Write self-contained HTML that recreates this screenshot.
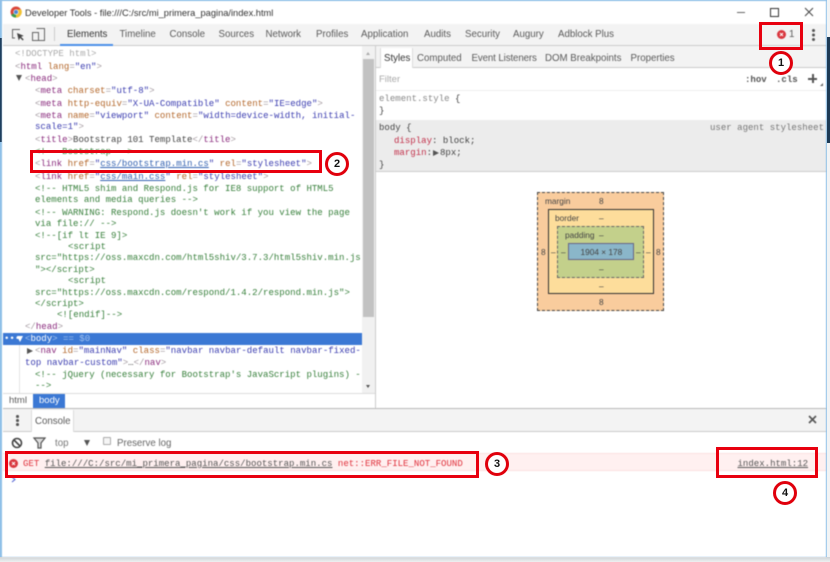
<!DOCTYPE html>
<html lang="es"><head><meta charset="utf-8"><title>Developer Tools</title>
<style>
html,body{margin:0;padding:0;background:#f4f6f7;}
#w{position:absolute;left:0;top:0;width:830px;height:562px;overflow:hidden;background:#f2f4f5;}
#f{position:absolute;left:2px;top:1px;width:824px;height:556px;background:#fff;filter:blur(.45px);overflow:hidden;}
#o{position:absolute;left:0;top:0;width:830px;height:562px;filter:blur(.25px);}
.a{position:absolute;white-space:pre;}
#ui{position:absolute;left:-2px;top:-1px;width:830px;height:562px;}
.s{font-family:"Liberation Sans",sans-serif;font-size:9.7px;color:#5a5a5a;line-height:12px;}
.m{font-family:"Liberation Mono",monospace;font-size:9.05px;line-height:12px;color:#444;}
.t{color:#8a2b7d}.n{color:#b4682c}.v{color:#3b3db0}.g{color:#a49aa0}.c{color:#38803c}.u{color:#2f5fb0;text-decoration:underline}
.r{position:absolute;border:3px solid #e8000f;box-sizing:border-box;}
.k{position:absolute;border:3px solid #e0000c;border-radius:50%;box-sizing:border-box;background:#fff;font:bold 11px/18px "Liberation Sans",sans-serif;color:#111;text-align:center;width:24px;height:24px;}
.b{position:absolute;box-sizing:border-box;}
.bm{font-family:"Liberation Sans",sans-serif;font-size:8.3px;color:#444;line-height:10px;}
</style></head><body>
<div id="w">
<div style="position:absolute;left:0;top:0;width:827px;height:558px;background:#8fc0e8;"></div>
<div style="position:absolute;left:0;top:38px;width:2px;height:104px;background:#1d3f5f;"></div>
<div style="position:absolute;left:827px;top:37px;width:3px;height:106px;background:#1d3a55;"></div>
<div style="position:absolute;left:0;top:557px;width:830px;height:5px;background:linear-gradient(#cfd3d6,#eef0f1);"></div>
<div id="f"><div id="ui">

<!-- title bar -->
<svg class="a" style="left:10px;top:6px" width="12" height="12" viewBox="0 0 12 12"><circle cx="6" cy="6" r="5.5" fill="#d9463a"/><path d="M6 6 1 9 A5.5 5.5 0 0 0 8 11.1Z" fill="#3d9a4c"/><path d="M6 3.5h5.2A5.5 5.5 0 0 1 6 11.5Z" fill="#f1c232"/><circle cx="6" cy="6" r="2.6" fill="#fff"/><circle cx="6" cy="6" r="2" fill="#4a86d8"/></svg>
<div class="a" style="left:25px;top:6.500px;font:9.300px/12px 'Liberation Sans',sans-serif;color:#333;">Developer Tools - file:///C:/src/mi_primera_pagina/index.html</div>
<div class="b" style="left:737px;top:12px;width:8px;height:1px;background:#666"></div>
<div class="b" style="left:770px;top:8px;width:9px;height:9px;border:1px solid #333"></div>
<svg class="a" style="left:804px;top:7px" width="10" height="10" viewBox="0 0 10 10"><path d="M1 1 9 9M9 1 1 9" stroke="#444" stroke-width="1" fill="none"/></svg>

<!-- main tab bar -->
<div class="b" style="left:3px;top:24px;width:824px;height:22px;background:#f3f3f3;border-bottom:1px solid #ccc"></div>
<svg class="a" style="left:11px;top:28px" width="14" height="14" viewBox="0 0 14 14"><path d="M9 1.5H1.5V10H4" stroke="#666" fill="none"/><path d="M6 5l1.7 7.5 1.4-2.6 2.6 2.6 1-1-2.6-2.6 2.6-1.2Z" fill="#444"/></svg>
<svg class="a" style="left:32px;top:27px" width="14" height="15" viewBox="0 0 14 15"><path d="M4.5 1.5h8v12h-8M.5 5.500h6v8h-6Z" stroke="#666" fill="none"/></svg>
<div class="b" style="left:54px;top:27px;width:1px;height:14px;background:#ccc"></div>
<div class="a s" style="left:67px;top:29px;color:#333">Elements</div>
<div class="a s" style="left:119.500px;top:29px">Timeline</div>
<div class="a s" style="left:169.500px;top:29px">Console</div>
<div class="a s" style="left:218.500px;top:29px">Sources</div>
<div class="a s" style="left:265.500px;top:29px">Network</div>
<div class="a s" style="left:316px;top:29px">Profiles</div>
<div class="a s" style="left:361px;top:29px">Application</div>
<div class="a s" style="left:424px;top:29px">Audits</div>
<div class="a s" style="left:465px;top:29px">Security</div>
<div class="a s" style="left:513px;top:29px">Augury</div>
<div class="a s" style="left:558px;top:29px">Adblock Plus</div>
<div class="b" style="left:60px;top:44px;width:53px;height:2px;background:#4b8fe8"></div>
<svg class="a" style="left:777px;top:30px" width="9" height="9" viewBox="0 0 9 9"><circle cx="4.500" cy="4.500" r="4.500" fill="#d9363e"/><path d="M3 3l3 3M6 3 3 6" stroke="#fff" stroke-width="1"/></svg>
<div class="a s" style="left:789px;top:29px">1</div>
<div class="b" style="left:812px;top:29px;width:3px;height:3px;border-radius:50%;background:#555;box-shadow:0 4.500px 0 #555,0 9px 0 #555"></div>

<!-- elements panel -->
<div class="a m g" style="left:15px;top:48px;color:#aaa">&lt;!DOCTYPE html&gt;</div>
<div class="a m" style="left:15px;top:60.500px"><span class="g">&lt;</span><span class="t">html</span> <span class="n">lang</span><span class="g">=</span><span class="v">"en"</span><span class="g">&gt;</span></div>
<div class="a" style="left:16px;top:75px;width:0;height:0;border-left:3.500px solid transparent;border-right:3.500px solid transparent;border-top:6px solid #555"></div>
<div class="a m" style="left:25px;top:72.500px"><span class="g">&lt;</span><span class="t">head</span><span class="g">&gt;</span></div>
<div class="a m" style="left:35px;top:85px"><span class="g">&lt;</span><span class="t">meta</span> <span class="n">charset</span><span class="g">=</span><span class="v">"utf-8"</span><span class="g">&gt;</span></div>
<div class="a m" style="left:35px;top:97.500px"><span class="g">&lt;</span><span class="t">meta</span> <span class="n">http-equiv</span><span class="g">=</span><span class="v">"X-UA-Compatible"</span> <span class="n">content</span><span class="g">=</span><span class="v">"IE=edge"</span><span class="g">&gt;</span></div>
<div class="a m" style="left:35px;top:109.500px"><span class="g">&lt;</span><span class="t">meta</span> <span class="n">name</span><span class="g">=</span><span class="v">"viewport"</span> <span class="n">content</span><span class="g">=</span><span class="v">"width=device-width, initial-</span></div>
<div class="a m" style="left:35px;top:121px"><span class="v">scale=1"</span><span class="g">&gt;</span></div>
<div class="a m" style="left:35px;top:133.500px"><span class="g">&lt;</span><span class="t">title</span><span class="g">&gt;</span>Bootstrap 101 Template<span class="g">&lt;/</span><span class="t">title</span><span class="g">&gt;</span></div>
<div class="a m c" style="left:35px;top:146px">&lt;!-- Bootstrap --&gt;</div>
<div class="a m" style="left:35px;top:158px"><span class="g">&lt;</span><span class="t">link</span> <span class="n">href</span><span class="g">=</span><span class="v">"</span><span class="u">css/bootstrap.min.cs</span><span class="v">"</span> <span class="n">rel</span><span class="g">=</span><span class="v">"stylesheet"</span><span class="g">&gt;</span></div>
<div class="a m" style="left:35px;top:171px"><span class="g">&lt;</span><span class="t">link</span> <span class="n">href</span><span class="g">=</span><span class="v">"</span><span class="u">css/main.css</span><span class="v">"</span> <span class="n">rel</span><span class="g">=</span><span class="v">"stylesheet"</span><span class="g">&gt;</span></div>
<div class="a m c" style="left:35px;top:182.500px">&lt;!-- HTML5 shim and Respond.js for IE8 support of HTML5</div>
<div class="a m c" style="left:35px;top:194px">elements and media queries --&gt;</div>
<div class="a m c" style="left:35px;top:206.500px">&lt;!-- WARNING: Respond.js doesn't work if you view the page</div>
<div class="a m c" style="left:35px;top:218px">via file:// --&gt;</div>
<div class="a m c" style="left:35px;top:229.500px">&lt;!--[if lt IE 9]&gt;</div>
<div class="a m c" style="left:68px;top:241px">&lt;script</div>
<div class="a m c" style="left:35px;top:252px">src="https://oss.maxcdn.com/html5shiv/3.7.3/html5shiv.min.js</div>
<div class="a m c" style="left:35px;top:264px">"&gt;&lt;/script&gt;</div>
<div class="a m c" style="left:68px;top:275px">&lt;script</div>
<div class="a m c" style="left:35px;top:286.500px">src="https://oss.maxcdn.com/respond/1.4.2/respond.min.js"&gt;</div>
<div class="a m c" style="left:35px;top:298px">&lt;/script&gt;</div>
<div class="a m c" style="left:57px;top:309px">&lt;![endif]--&gt;</div>
<div class="a m" style="left:25px;top:321px"><span class="g">&lt;/</span><span class="t">head</span><span class="g">&gt;</span></div>
<div class="b" style="left:3px;top:333px;width:359px;height:11.500px;background:#3b78d4"></div>
<div class="a m" style="left:4px;top:332.500px;color:#fff">•••</div>
<div class="a" style="left:17px;top:336px;width:0;height:0;border-left:3.500px solid transparent;border-right:3.500px solid transparent;border-top:6px solid #fff"></div>
<div class="a m" style="left:25px;top:332.500px;color:#fff"><span style="color:#9fc0ee">&lt;</span>body<span style="color:#9fc0ee">&gt; == $0</span></div>
<div class="b" style="left:19px;top:345px;width:1px;height:48px;background:#e4e4e4"></div>
<div class="a" style="left:27px;top:348px;width:0;height:0;border-top:3.500px solid transparent;border-bottom:3.500px solid transparent;border-left:6px solid #555"></div>
<div class="a m" style="left:35px;top:345px"><span class="g">&lt;</span><span class="t">nav</span> <span class="n">id</span><span class="g">=</span><span class="v">"mainNav"</span> <span class="n">class</span><span class="g">=</span><span class="v">"navbar navbar-default navbar-fixed-</span></div>
<div class="a m" style="left:25px;top:356.500px"><span class="v">top navbar-custom"</span><span class="g">&gt;</span>…<span class="g">&lt;/</span><span class="t">nav</span><span class="g">&gt;</span></div>
<div class="a m c" style="left:35px;top:369px">&lt;!-- jQuery (necessary for Bootstrap's JavaScript plugins) -</div>
<div class="a m c" style="left:35px;top:380px">--&gt;</div>

<!-- scrollbar -->
<div class="b" style="left:362px;top:46px;width:13px;height:347px;background:#f1f1f1"></div>
<div class="b" style="left:363px;top:59px;width:11px;height:258px;background:#c2c2c2"></div>
<div class="a" style="left:366px;top:52px;width:0;height:0;border-left:2.500px solid transparent;border-right:2.500px solid transparent;border-bottom:3px solid #aaa"></div>
<div class="a" style="left:366px;top:385px;width:0;height:0;border-left:2.500px solid transparent;border-right:2.500px solid transparent;border-top:3px solid #555"></div>

<!-- breadcrumb -->
<div class="b" style="left:3px;top:393px;width:372px;height:16px;background:#fff;border-top:1px solid #ddd"></div>
<div class="a s" style="left:9px;top:395px;font-size:9.500px">html</div>
<div class="b" style="left:33px;top:394px;width:32px;height:15px;background:#3b78d4"></div>
<div class="a s" style="left:39px;top:395px;color:#fff;font-size:9.500px">body</div>

<!-- sidebar -->
<div class="b" style="left:375px;top:46px;width:1px;height:363px;background:#ccc"></div>
<div class="b" style="left:376px;top:46px;width:451px;height:22px;background:#f3f3f3;border-bottom:1px solid #ccc"></div>
<div class="b" style="left:380px;top:48px;width:33px;height:20px;background:#fff;border-left:1px solid #ddd;border-right:1px solid #ddd"></div>
<div class="a s" style="left:384px;top:53px;color:#333">Styles</div>
<div class="a s" style="left:417px;top:53px">Computed</div>
<div class="a s" style="left:471.500px;top:53px;letter-spacing:-.1px">Event Listeners</div>
<div class="a s" style="left:545px;top:53px">DOM Breakpoints</div>
<div class="a s" style="left:630.500px;top:53px">Properties</div>
<div class="a s" style="left:379px;top:74px;color:#aaa;font-size:9.500px">Filter</div>
<div class="a m" style="left:745px;top:74px;color:#555;font-weight:bold">:hov</div>
<div class="a m" style="left:776px;top:74px;color:#555;font-weight:bold">.cls</div>
<div class="a" style="left:808px;top:74px;width:9px;height:1.500px;margin-top:4px;background:#555"></div>
<div class="a" style="left:812px;top:74px;width:1.500px;height:9px;background:#555"></div>
<div class="a" style="left:820px;top:83px;width:0;height:0;border-left:3px solid transparent;border-bottom:3px solid #666"></div>
<div class="b" style="left:376px;top:90px;width:451px;height:1px;background:#eee"></div>
<div class="a m" style="left:379px;top:92.500px;color:#888">element.style <span style="color:#444">{</span></div>
<div class="a m" style="left:379px;top:105px">}</div>
<div class="b" style="left:376px;top:120px;width:451px;height:52px;background:#ececec;border-bottom:1px solid #ccc"></div>
<div class="a m" style="left:379px;top:122px">body {</div>
<div class="a m" style="left:710px;top:122px;color:#777">user agent stylesheet</div>
<div class="a m" style="left:394px;top:135px"><span style="color:#c2304a">display</span>: block;</div>
<div class="a m" style="left:394px;top:147px"><span style="color:#c2304a">margin</span>:</div>
<div class="a" style="left:433px;top:150px;width:0;height:0;border-top:3px solid transparent;border-bottom:3px solid transparent;border-left:6px solid #555"></div>
<div class="a m" style="left:440px;top:147px">8px;</div>
<div class="a m" style="left:379px;top:159px">}</div>

<!-- box model -->
<div class="b" style="left:537px;top:192px;width:127px;height:119px;background:#f9cc9d;border:1px dashed #444"></div>
<div class="b" style="left:548px;top:209px;width:106px;height:85px;background:#fddd9b;border:1px solid #333"></div>
<div class="b" style="left:557px;top:226px;width:87px;height:52px;background:#c3d08b;border:1px dashed #666"></div>
<div class="b" style="left:568px;top:243px;width:66px;height:17px;background:#8ab6c9;border:1px solid #668"></div>
<div class="a bm" style="left:545px;top:196px">margin</div>
<div class="a bm" style="left:599px;top:196px">8</div>
<div class="a bm" style="left:555px;top:213px">border</div>
<div class="a bm" style="left:599px;top:213px">–</div>
<div class="a bm" style="left:565px;top:230px">padding</div>
<div class="a bm" style="left:599px;top:230px">–</div>
<div class="a bm" style="left:580.500px;top:247px">1904 × 178</div>
<div class="a bm" style="left:541px;top:247px">8</div>
<div class="a bm" style="left:551px;top:247px">–</div>
<div class="a bm" style="left:561px;top:247px">–</div>
<div class="a bm" style="left:636px;top:247px">–</div>
<div class="a bm" style="left:646px;top:247px">–</div>
<div class="a bm" style="left:656px;top:247px">8</div>
<div class="a bm" style="left:599px;top:264px">–</div>
<div class="a bm" style="left:599px;top:281px">–</div>
<div class="a bm" style="left:599px;top:297px">8</div>

<!-- drawer -->
<div class="b" style="left:3px;top:408px;width:824px;height:24px;background:#f3f3f3;border-top:1px solid #bbb;border-bottom:1px solid #ccc"></div>
<div class="b" style="left:16px;top:415px;width:2.500px;height:2.500px;border-radius:50%;background:#555;box-shadow:0 4px 0 #555,0 8px 0 #555"></div>
<div class="b" style="left:31px;top:410px;width:43px;height:22px;background:#fff;border-left:1px solid #ddd;border-right:1px solid #ddd"></div>
<div class="a s" style="left:35px;top:416px">Console</div>
<svg class="a" style="left:808px;top:415px" width="9" height="9" viewBox="0 0 9 9"><path d="M1 1 8 8M8 1 1 8" stroke="#555" stroke-width="1.600" fill="none"/></svg>

<!-- console toolbar -->
<svg class="a" style="left:11px;top:437px" width="12" height="12" viewBox="0 0 12 12"><circle cx="6" cy="6" r="4.500" stroke="#444" stroke-width="1.600" fill="none"/><path d="M3 3l6 6" stroke="#444" stroke-width="1.600"/></svg>
<svg class="a" style="left:33px;top:437px" width="13" height="12" viewBox="0 0 13 12"><path d="M1 1h11L8 6v5H5V6Z" stroke="#555" stroke-width="1.200" fill="#ddd"/></svg>
<div class="a s" style="left:55px;top:437.500px;color:#777">top</div>
<div class="a" style="left:84px;top:440px;width:0;height:0;border-left:3.500px solid transparent;border-right:3.500px solid transparent;border-top:6px solid #555"></div>
<div class="b" style="left:103px;top:437px;width:8px;height:8px;border:1px solid #aaa;border-radius:1px;background:#f5f5f5"></div>
<div class="a s" style="left:117px;top:437.500px;color:#666">Preserve log</div>

<!-- error row -->
<div class="b" style="left:3px;top:453px;width:824px;height:18px;background:#fff0f0;border-top:1px solid #fbe0e0;border-bottom:1px solid #fbe0e0"></div>
<svg class="a" style="left:9px;top:459px" width="9" height="9" viewBox="0 0 9 9"><circle cx="4.500" cy="4.500" r="4.500" fill="#d9363e"/><path d="M3 3l3 3M6 3 3 6" stroke="#fff" stroke-width="1"/></svg>
<div class="a m" style="left:23px;top:458px;color:#e0313c">GET <span style="color:#555;text-decoration:underline">file:///C:/src/mi_primera_pagina/css/bootstrap.min.cs</span> net::ERR_FILE_NOT_FOUND</div>
<div class="a m" style="left:737.500px;top:458px;color:#555;text-decoration:underline">index.html:12</div>
<svg class="a" style="left:11px;top:476px" width="6" height="7" viewBox="0 0 6 7"><path d="M1 1 4 3.500 1 6" stroke="#4a5bd0" fill="none"/></svg>
</div></div>

<!-- annotations -->
<div id="o">
<div class="r" style="left:759px;top:22px;width:44px;height:28px"></div>
<div class="k" style="left:769px;top:51px">1</div>
<div class="r" style="left:30px;top:150px;width:292px;height:23px"></div>
<div class="k" style="left:325px;top:152px">2</div>
<div class="r" style="left:5px;top:451px;width:474px;height:27px"></div>
<div class="k" style="left:485px;top:452px">3</div>
<div class="r" style="left:716px;top:447px;width:102px;height:31px"></div>
<div class="k" style="left:773px;top:481px">4</div>
</div>
</div>
</body></html>
